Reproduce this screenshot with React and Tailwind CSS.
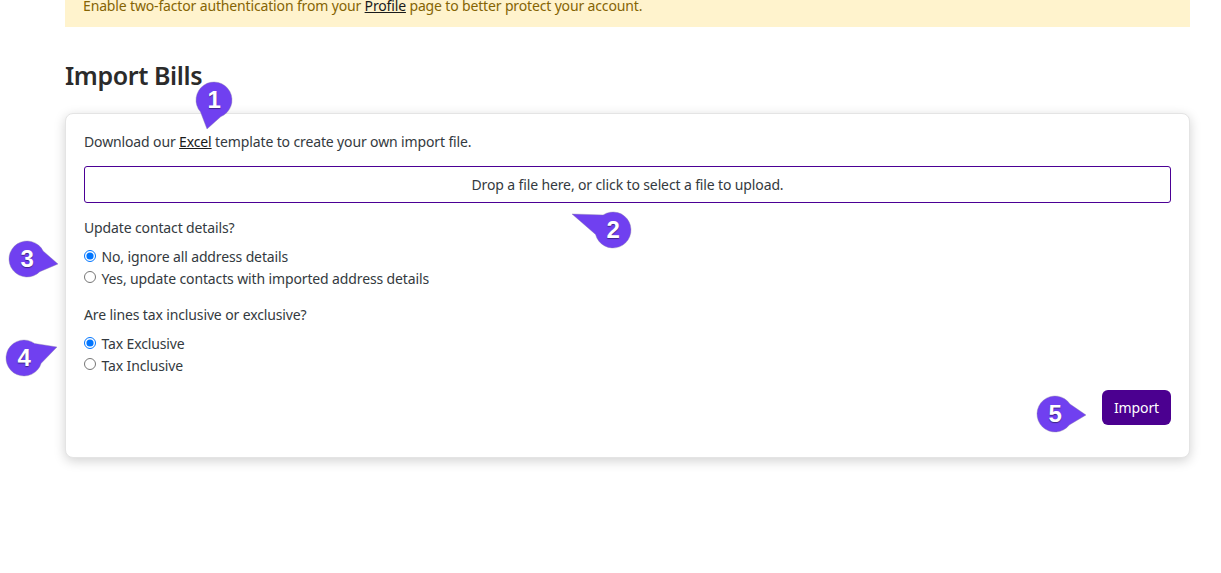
const font = "font-['Noto_Sans','Liberation_Sans',sans-serif]";

function Badge({ n, tx, ty, className }) {
  const a = Math.atan2(ty, tx);
  const r = 18;
  const spread = 0.62;
  const p1 = [r * Math.cos(a - spread), r * Math.sin(a - spread)];
  const p2 = [r * Math.cos(a + spread), r * Math.sin(a + spread)];
  const d = `M ${18 + p2[0]} ${18 + p2[1]} A ${r} ${r} 0 1 1 ${18 + p1[0]} ${18 + p1[1]} L ${18 + tx} ${18 + ty} Z`;
  return (
    <div className={`absolute w-9 h-9 ${className}`}>
      <svg viewBox="0 0 36 36" className="absolute inset-0 w-9 h-9 overflow-visible">
        <path d={d} fill="#7040f0" stroke="#8a80a8" strokeWidth="0.4" />
      </svg>
      <span className="relative flex w-9 h-9 items-center justify-center text-[24px] font-bold leading-none text-white font-['Liberation_Sans',sans-serif] [text-shadow:0_1px_1px_rgba(0,0,0,0.45)]">
        {n}
      </span>
    </div>
  );
}

function Radio({ name, label, checked }) {
  return (
    <label className="flex items-center h-[21.5px]">
      <input type="radio" name={name} defaultChecked={checked} className="mr-[5.5px] w-[12px] h-[12px] -mt-[2px]" />
      <span>{label}</span>
    </label>
  );
}

export default function App() {
  return (
    <div className={`relative h-[573px] overflow-hidden bg-white pl-[65px] pr-[31px] text-[14px] tracking-[-0.13px] text-[#343a40] ${font}`}>
      <div className="h-[27px] bg-[#fff3cd] pl-[18px] text-[#856404] leading-[12px] tracking-[-0.15px] whitespace-nowrap">
        Enable two-factor authentication from your <a className="underline text-[#1a1a1a]">Profile</a> page to better protect your account.
      </div>

      <h1 className="mt-[30px] h-[36px] text-[25px] leading-[36px] font-semibold tracking-[-0.4px] text-[#2b2b2b]">Import Bills</h1>

      <div className="mt-[20px] h-[345px] rounded-lg border border-[#e4e4e4] bg-white px-[18px] pt-[17px] shadow-[0_3px_12px_rgba(0,0,0,0.18)]">
        <p className="h-[21px] leading-[21px]">
          Download our <a className="underline text-[#1a1a1a]">Excel</a> template to create your own import file.
        </p>
        <div className="mt-[14px] flex h-[37px] items-center justify-center rounded-[3px] border border-[#4b0095]">
          Drop a file here, or click to select a file to upload.
        </div>

        <p className="mt-[14px] h-[21px] leading-[21px]">Update contact details?</p>
        <div className="mt-[8px]">
          <Radio name="contact" label="No, ignore all address details" checked />
          <Radio name="contact" label="Yes, update contacts with imported address details" />
        </div>

        <p className="mt-[15px] h-[21px] leading-[21px]">Are lines tax inclusive or exclusive?</p>
        <div className="mt-[8px]">
          <Radio name="tax" label="Tax Exclusive" checked />
          <Radio name="tax" label="Tax Inclusive" />
        </div>

        <div className="mt-[14px] flex justify-end">
          <button className="h-[35px] w-[69px] rounded-md bg-[#4b0090] text-white">Import</button>
        </div>
      </div>

      <Badge n="1" tx={-7} ty={29} className="left-[196px] top-[82px]" />
      <Badge n="2" tx={-41} ty={-16} className="left-[595px] top-[212px]" />
      <Badge n="3" tx={31} ty={5} className="left-[9px] top-[241px]" />
      <Badge n="4" tx={33} ty={-11} className="left-[6px] top-[340px]" />
      <Badge n="5" tx={31} ty={1} className="left-[1037px] top-[396px]" />
    </div>
  );
}
